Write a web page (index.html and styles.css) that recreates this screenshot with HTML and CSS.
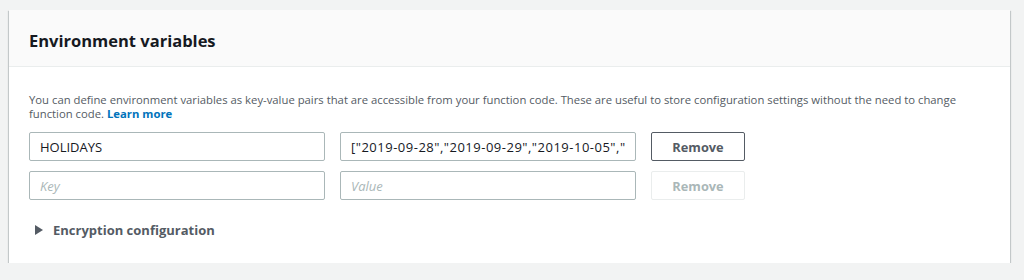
FILE: index.html
```html
<!DOCTYPE html>
<html lang="en">
<head>
    <meta charset="UTF-8">
    <title>Environment variables</title>
    <link rel="stylesheet" href="styles.css">
</head>
<body>
    <div class="panel">
        <div class="panel-header">
            <h2>Environment variables</h2>
        </div>
        <div class="panel-body">
            <p class="description">You can define environment variables as key-value pairs that are accessible from your function code. These are useful to store configuration settings without the need to change function code. <a href="#">Learn more</a></p>

            <div class="env-row">
                <input type="text" class="env-input" value="HOLIDAYS">
                <input type="text" class="env-input value-input" value='["2019-09-28","2019-09-29","2019-10-05","2019-10-06"]'>
                <button class="remove-button">Remove</button>
            </div>
            <div class="env-row">
                <input type="text" class="env-input" placeholder="Key">
                <input type="text" class="env-input" placeholder="Value">
                <button class="remove-button" disabled>Remove</button>
            </div>

            <div class="expander">
                <span class="caret"></span>
                <span class="expander-label">Encryption configuration</span>
            </div>
        </div>
    </div>
</body>
</html>
```

FILE: styles.css
```css
body {
    margin: 0;
    padding: 10px 14px 0 9px;
    background-color: #f2f3f3;
    font-family: "Open Sans", Arial, sans-serif;
    color: #16191f;
}
.panel {
    background: white;
    box-shadow: 0 1px 1px 0 rgba(0, 28, 36, 0.3), 1px 1px 1px 0 rgba(0, 28, 36, 0.15), -1px 1px 1px 0 rgba(0, 28, 36, 0.15);
}
.panel-header {
    background-color: #fafafa;
    border-bottom: 1px solid #eaeded;
    height: 57px;
    box-sizing: border-box;
    padding: 4px 20px 0 20px;
    display: flex;
    align-items: center;
}
.panel-header h2 {
    margin: 0;
    font-size: 16.5px;
    font-weight: 700;
    color: #16191f;
}
.panel-body {
    padding: 26px 20px 24px 20px;
}
.description {
    margin: 0 0 11px 0;
    font-size: 11.3px;
    line-height: 14px;
    color: #545b64;
}
.description a {
    color: #0073bb;
    font-weight: 700;
    text-decoration: none;
}
.env-row {
    display: flex;
    gap: 15px;
    margin-bottom: 10px;
}
.env-input {
    width: 296px;
    height: 29px;
    box-sizing: border-box;
    padding: 0 10px;
    border: 1px solid #aab7b8;
    border-radius: 2px;
    font-family: "Open Sans", Arial, sans-serif;
    font-size: 13px;
    color: #16191f;
    text-overflow: clip;
}
.value-input {
    letter-spacing: 0.5px;
}
.env-input::placeholder {
    color: #aab7b8;
    font-style: italic;
    letter-spacing: 0;
}
.remove-button {
    width: 94px;
    height: 29px;
    border: 1px solid #545b64;
    border-radius: 2px;
    background: white;
    font-family: "Open Sans", Arial, sans-serif;
    font-size: 12.8px;
    font-weight: 700;
    color: #545b64;
}
.remove-button:disabled {
    border-color: #eaeded;
    color: #aab7b8;
}
.expander {
    display: flex;
    align-items: center;
    height: 18px;
    margin-top: 21px;
    padding-left: 6px;
}
.caret {
    width: 0;
    height: 0;
    border-top: 5px solid transparent;
    border-bottom: 5px solid transparent;
    border-left: 8px solid #545b64;
    margin-right: 10px;
}
.expander-label {
    font-size: 13px;
    font-weight: 700;
    color: #545b64;
}
```
